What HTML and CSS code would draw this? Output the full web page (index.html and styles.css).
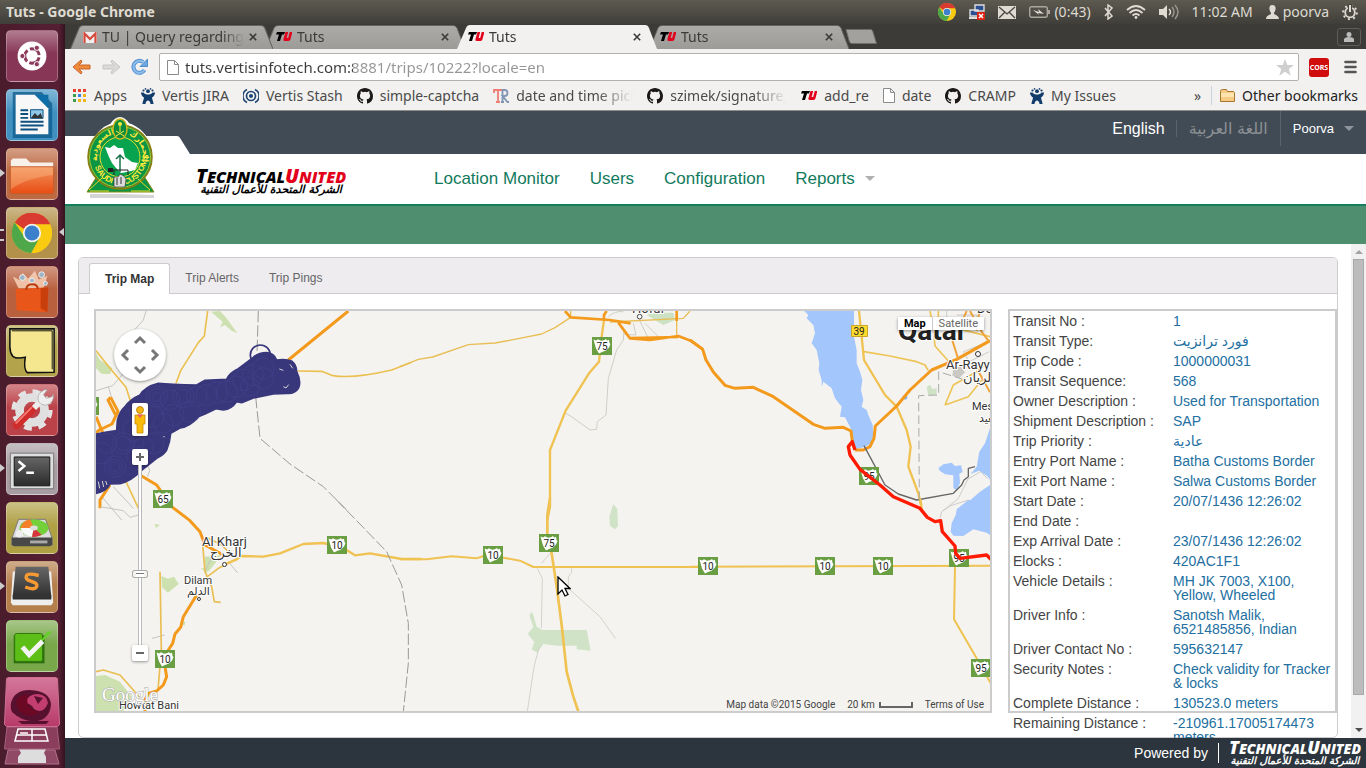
FILE: index.html
```html
<!DOCTYPE html>
<html lang="en">
<head>
<meta charset="utf-8">
<title>Tuts - Google Chrome</title>
<link rel="stylesheet" href="styles.css">
</head>
<body>
<svg class="defs" width="0" height="0" aria-hidden="true">
  <defs>
    <symbol id="shield" viewBox="0 0 20 18"><path fill="#6a9e42" d="M0 0h20v18H0z"/><path fill="#fff" d="M1.500 2.500 4 3.500l2-1.300 3 1.500 3-.5 2-1.200 1 1.500 2-.8.500 3.300 1 1-1.500 3.500-3 3-4 1.500-3 1.500-3-5z"/></symbol>
    <symbol id="chrome" viewBox="0 0 42 42"><circle cx="21" cy="21" r="21" fill="#f9cc12"/><path fill="#da3b30" d="M3 10a21 21 0 0 1 37 2H21a9 9 0 0 0-8 5z"/><path fill="#4ea84a" d="M3 10a21 21 0 0 0 17 32l9-16a9 9 0 0 1-16-1z"/><circle cx="21" cy="21" r="9.500" fill="#f3f1ee"/><circle cx="21" cy="21" r="7.700" fill="#3c7fca"/></symbol>
    <symbol id="github" viewBox="0 0 16 16"><path fill="#1b1817" d="M8 0C3.580 0 0 3.580 0 8c0 3.540 2.290 6.530 5.470 7.590.4.070.550-.170.550-.380 0-.190-.010-.820-.010-1.490-2.010.370-2.530-.490-2.690-.940-.090-.230-.480-.940-.820-1.130-.280-.150-.680-.520-.010-.530.630-.010 1.080.580 1.230.820.720 1.210 1.870.870 2.330.660.070-.520.280-.870.510-1.070-1.780-.2-3.640-.890-3.640-3.950 0-.870.310-1.590.820-2.150-.080-.2-.360-1.020.080-2.120 0 0 .670-.210 2.200.820a7.600 7.600 0 0 1 4 0c1.530-1.040 2.200-.820 2.200-.820.440 1.100.160 1.920.080 2.120.510.560.820 1.270.820 2.150 0 3.070-1.870 3.750-3.650 3.950.290.250.540.730.540 1.480 0 1.070-.010 1.930-.010 2.200 0 .210.150.460.550.380A8 8 0 0 0 16 8c0-4.420-3.580-8-8-8z"/></symbol>
    <symbol id="jira" viewBox="0 0 14 16"><g fill="#123c6b"><circle cx="7" cy="3.200" r="1.900"/><circle cx="2.500" cy="2.500" r="1.100"/><circle cx="11.500" cy="2.500" r="1.100"/><circle cx="4.500" cy=".9" r=".8"/><circle cx="9.500" cy=".9" r=".8"/><path d="M0 4.500h2.500C3.500 6 5 6.500 7 6.500s3.500-.5 4.500-2H14c0 2.500-1.500 4-3 5 .2 2.500 1.500 4 1.500 6.500H9.500c0-2-1.500-3.500-2.500-3.500S4.500 14 4.500 16h-3C1.500 13.500 2.800 12 3 9.500c-1.500-1-3-2.500-3-5z"/></g></symbol>
    <symbol id="tu" viewBox="0 0 16 10"><path d="M1 0h8L8 2.600H6L4 9H1l2-6.400H0z"/><path fill="#e2001a" d="M9.500 0h2.700l-1.600 6h1.600L13.700 0H16.400l-2 7.500q-.5 1.500-2.400 1.500H9Q7 9 7.400 7.200z"/></symbol>
    <symbol id="page" viewBox="0 0 12 15"><path fill="#fff" stroke="#8b8b8b" d="M.5.5h7l4 4v10H.5zM7.500.500v4h4"/></symbol>
    <symbol id="cross" viewBox="0 0 8 8"><path fill="none" stroke="currentColor" stroke-width="1.600" d="m.8.8 6.400 6.400m0-6.400L.8 7.200"/></symbol>
    <linearGradient id="tabgrey" x2="0" y2="1"><stop stop-color="#adaba9"/><stop offset="1" stop-color="#9d9b98"/></linearGradient>
    <linearGradient id="orange" x2="0" y2="1"><stop stop-color="#f2935c"/><stop offset="1" stop-color="#e84d14"/></linearGradient>
    <linearGradient id="dark" x2="0" y2="1"><stop stop-color="#666"/><stop offset="1" stop-color="#2b2b2b"/></linearGradient>
  </defs>
</svg>

<div class="desktop">
  <header class="panel">
    <strong class="panel-title">Tuts - Google Chrome</strong>
    <div class="tray">
      <svg width="18" height="18"><use href="#chrome"/></svg>
      <svg width="16" height="16"><path fill="#2c4f93" stroke="#ddd" stroke-width="1.400" d="M6 1h9v6H6zM1 6h8v6H1z"/><path fill="#ddd" d="M0 13h10v2H0z"/><path fill="#d21" d="M8 8h8v8H8z"/><path stroke="#fff" stroke-width="1.500" d="m10 10 4 4m0-4-4 4"/></svg>
      <svg width="18" height="13"><path fill="#dfdbd2" d="M0 0h18v13H0z"/><path fill="none" stroke="#45443f" stroke-width="1.300" d="m1 1 8 7 8-7M1 12l6-6m10 6-6-6"/></svg>
      <span class="battery"><svg width="21" height="12"><rect x=".7" y=".7" width="17.600" height="10.600" rx="2" fill="none" stroke="#aaa79e" stroke-width="1.400"/><path fill="#aaa79e" d="M19 4h2v4h-2z"/><path fill="#dfdbd2" d="m4 4 6 2-1-3 6 5-6-1 1 2z"/></svg>(0:43)</span>
      <svg width="9" height="16"><path fill="none" stroke="#dfdbd2" stroke-width="1.500" d="m1 4 7 8-4 3V1l4 3-7 8"/></svg>
      <svg width="20" height="14"><g fill="none" stroke="#dfdbd2" stroke-width="1.800"><path d="M1 5q9-8 18 0M3.500 8q6.500-6 13 0M6.500 10.500q3.500-3 7 0"/></g><circle cx="10" cy="12.500" r="1.400" fill="#dfdbd2"/></svg>
      <svg width="20" height="16"><path fill="#dfdbd2" d="M0 5h4l4-4v14l-4-4H0z"/><path fill="none" stroke="#dfdbd2" stroke-width="1.500" d="M10 5q3 3 0 6"/><path fill="none" stroke="#98958c" stroke-width="1.500" d="M13 3q4 5 0 10M16 1q6 7 0 14"/></svg>
      <span class="clock">11:02 AM</span>
      <span class="who"><svg width="13" height="14"><path fill="#dfdbd2" d="M6.500 0C9 0 10 2 9.500 4.500 9 7 8 7 8 8.500c0 1.500 5 1.500 5 5.500H0c0-4 5-4 5-5.500C5 7 4 7 3.500 4.500 3 2 4 0 6.500 0z"/></svg>poorva</span>
      <svg width="16" height="16"><circle cx="8" cy="8.500" r="4.800" fill="none" stroke="#dfdbd2" stroke-width="1.800"/><circle cx="8" cy="8.500" r="6.800" fill="none" stroke="#dfdbd2" stroke-width="2" stroke-dasharray="2 3.340"/><path stroke="#45443f" stroke-width="4" d="M8 0v7"/><path stroke="#dfdbd2" stroke-width="2" d="M8 1v7"/></svg>
    </div>
  </header>

  <aside class="launcher">
    <div class="tile ubuntu"><svg viewBox="0 0 52 52"><circle cx="26" cy="26" r="15" fill="#fff"/><g fill="none" stroke="#8c3a5b"><circle cx="26" cy="26" r="7.500" stroke-width="3" stroke-dasharray="13 2.700" stroke-dashoffset="-1.500"/></g><g fill="#8c3a5b" stroke="#fff"><circle cx="16" cy="26" r="2.700"/><circle cx="31" cy="17.500" r="2.700"/><circle cx="31" cy="34.500" r="2.700"/></g></svg></div>
    <div class="tile writer"><svg viewBox="0 0 52 52"><path fill="#0f5c8e" d="M6 2h30l11 12v36H6z" opacity=".8"/><path fill="#f8f8f8" d="M9 5h20l14 14v27H9z"/><path fill="#0d6ea8" d="M29 5h14v14z"/><path stroke="#0d4f7e" stroke-width="2" d="M14 21h8m-8 4h8m-8 4h8m-8 4h24m-24 4h24m-24 4h18"/><path fill="#8cc7e8" stroke="#0d4f7e" d="M24.500 20.500h13v9h-13z"/><path fill="#333" d="m25 29 4-5 3 3 3-3 2 5z"/></svg></div>
    <div class="tile files run"><svg viewBox="0 0 52 52"><path fill="#f8f1ea" d="M4 14V12l2-2h14l4 4h24v10H4z"/><path fill="url(#orange)" stroke="#c65b27" d="M3.500 18.500h45v26l-1 2h-43l-1-2z"/><path fill="#ffd0a0" opacity=".3" d="M4 19h44v8Q20 30 4 42z"/></svg></div>
    <div class="tile chrome run many on"><svg viewBox="0 0 52 52"><use href="#chrome" x="5" y="5" width="42" height="42"/></svg></div>
    <div class="tile store"><svg viewBox="0 0 52 52"><path fill="#fbd6bd" opacity=".8" d="m12 22-6-12 8 4 2-8 6 6 7-8 4 9 9-4-4 13z"/><g fill="#9db4c7" stroke="#eee"><circle cx="16" cy="11" r="3"/><circle cx="26" cy="14" r="2.500"/><circle cx="36" cy="8" r="3"/><circle cx="40" cy="17" r="2"/></g><path fill="#e8561a" d="M9 23 43 21l-1 26-32-2z"/><path fill="#c93f0c" d="m35 22 8-1-1 26-7-4z"/><path fill="none" stroke="#b83c0c" stroke-width="2" d="M20 24q0-6 6-6t6 5"/></svg></div>
    <div class="tile notes"><svg viewBox="0 0 52 52"><path fill="#f4e790" stroke="#111" stroke-width="1.600" d="M3 3h46v45l-28 .5q-4-4-2-16-9 2-13-1-3-4-3-10z"/><path fill="none" stroke="#111" d="M5 5h42v40"/></svg></div>
    <div class="tile tools"><svg viewBox="0 0 52 52"><circle cx="26" cy="26" r="19" fill="none" stroke="#e3e3e3" stroke-width="5" stroke-dasharray="8 6.920"/><circle cx="26" cy="26" r="13" fill="none" stroke="#e0e0e0" stroke-width="9"/><path fill="none" stroke="#d12c2c" stroke-width="8" stroke-linecap="round" d="m10 42 17-17"/><path fill="none" stroke="#f27a70" stroke-width="2" d="m9 40 17-17"/><path fill="none" stroke="#eee" stroke-width="6" d="m28 24 9-9"/><path fill="#eee" stroke="#999" stroke-width=".6" d="M33 18q-3-9 6-13l3 0-4 5 3 4 6-2 1-3q2 10-8 12-4 0-7-3z"/></svg></div>
    <div class="tile term run"><svg viewBox="0 0 52 52"><path fill="#ddd" stroke="#777" d="M3.500 9.500h45v37h-45z"/><path fill="url(#dark)" stroke="#111" d="M7.500 13.500h37v30h-37z"/><path fill="none" stroke="#fff" stroke-width="2.600" d="m12 18 6 5-6 5m8 2h8"/></svg></div>
    <div class="tile disk"><svg viewBox="0 0 52 52"><path fill="#ddd" stroke="#777" d="M12 17h28l7 20v7H5v-7z"/><path fill="#484848" d="M5 36h42v7l-2 2H7l-2-2z"/><path fill="#aaa" d="M24 39h18v3H24z"/><ellipse cx="28" cy="26" rx="15" ry="9" fill="#73d03a"/><path fill="#f48029" d="m28 26-14 0q2-8 10-9z"/><path fill="#f8f8f8" d="m28 26-14 0q2 8 12 9z"/><path fill="#d8343e" d="m28 26 8 7q-5 3-10 2z"/><ellipse cx="28" cy="26" rx="4" ry="2.500" fill="#ddd"/><circle cx="13" cy="32" r="4" fill="#eee"/></svg></div>
    <div class="tile subl run"><svg viewBox="0 0 52 52"><path fill="#eee" d="m6 10-2 32 2 3h40l2-3-2-32z"/><path fill="url(#dark)" d="M9 5h34l3 30v4H6v-4z"/><path fill="#333" d="M6 34h40v4H6z"/><path fill="none" stroke="#f79a33" stroke-width="3.600" d="M33 14q-12-3-13 1-1 3 5 5 7 2 6 5-2 5-12 1"/></svg></div>
    <div class="tile done"><svg viewBox="0 0 52 52"><path fill="#2c6d0e" d="M7 15h32v29H7z"/><rect x="8" y="13" width="29" height="29" rx="2" fill="#5ebe18" stroke="#2f7a0c"/><path fill="#66cf2c" d="m30 28 17-17h-5z"/><path fill="none" stroke="#f4f4f4" stroke-width="5" d="m16 27 7 8 14-14"/></svg></div>
    <div class="stack">
      <svg viewBox="0 0 56 90"><defs><linearGradient id="pink" x2="0" y2="1"><stop stop-color="#d4789a"/><stop offset="1" stop-color="#b73a68"/></linearGradient></defs><path fill="#904a66" stroke="#b07089" d="m4 74-3 14h54l-4-14z"/><path fill="#ddd" d="M15 73h27l-2 4 2 4v6H14v-6l3-4z"/><path fill="#8a3e5b" stroke="#a5607c" d="M3 51 .5 73h55L53 51z"/><path fill="none" stroke="#fff" stroke-width="1.500" d="m14 53-3 12h33l-3-12zM12 59h31M28 53v12M16 57h8"/><path fill="url(#pink)" stroke="#cf6f92" d="m4.500 1.500 47 0 2 1 2 46-2 2h-51l-2-2 2-46z"/><path fill="#57112e" d="M9 22q6-10 22-7.500 15 2 16 14-1 15-16 17Q17 45 8 36 5 29 9 22z"/><path fill="#c23e70" d="M21 27q3-9 13-9 9 1 10 9-5 12-14 6-2-5-9-6z"/><path fill="#6b0823" d="M13 23q5-5 11-4-4 14 12 17-9 7-18 1-7-5-5-14z"/><path fill="#57112e" d="m30 20 9 2-5 6zM14 45h31l-3 3H18z"/></svg>
    </div>
  </aside>

  <div class="window">
    <div class="tabstrip">
      <div class="tab t1"><svg class="tab-shape" viewBox="0 0 200 24" preserveAspectRatio="none"><path fill="url(#tabgrey)" stroke="#65635f" d="M.500 24 9 3q1-2.500 4-2.500h175q3 0 4 2.500l8 21"/></svg><svg width="16" height="11"><path fill="#eee" d="M2 0h14v11H2z"/><path fill="none" stroke="#d54b3d" stroke-width="2.200" d="M3.500 11V1.500L9 7l5.500-5.500V11"/></svg><span class="tab-title">TU | Query regarding</span><button class="x" aria-label="Close"><svg width="8" height="8"><use href="#cross"/></svg></button></div>
      <div class="tab t2"><svg class="tab-shape" viewBox="0 0 200 24" preserveAspectRatio="none"><path fill="url(#tabgrey)" stroke="#65635f" d="M.500 24 9 3q1-2.500 4-2.500h175q3 0 4 2.500l8 21"/></svg><svg width="16" height="10"><use href="#tu"/></svg><span class="tab-title">Tuts</span><button class="x" aria-label="Close"><svg width="8" height="8"><use href="#cross"/></svg></button></div>
      <div class="tab t3"><svg class="tab-shape" viewBox="0 0 200 24" preserveAspectRatio="none"><path fill="#f2f1f0" d="M0 24 9 3q1-3 4-3h175q3 0 4 3l8 21z"/></svg><svg width="16" height="10"><use href="#tu"/></svg><span class="tab-title">Tuts</span><button class="x" aria-label="Close"><svg width="8" height="8"><use href="#cross"/></svg></button></div>
      <div class="tab t4"><svg class="tab-shape" viewBox="0 0 200 24" preserveAspectRatio="none"><path fill="url(#tabgrey)" stroke="#65635f" d="M.500 24 9 3q1-2.500 4-2.500h175q3 0 4 2.500l8 21"/></svg><svg width="16" height="10"><use href="#tu"/></svg><span class="tab-title">Tuts</span><button class="x" aria-label="Close"><svg width="8" height="8"><use href="#cross"/></svg></button></div>
      <button class="newtab" aria-label="New tab"><svg width="32" height="15"><path fill="#a3a19e" stroke="#6f6d69" d="M1 .5h25l1.500 1 4 13H6L4.500 13z"/></svg></button>
      <button class="avatar" aria-label="Profile"><svg width="10" height="10"><circle cx="5" cy="2.500" r="2.500" fill="#bbb"/><path fill="#bbb" d="M0 10V7q1-2 5-2t5 2v3z"/></svg></button>
    </div>

    <div class="toolbar">
      <button class="tool" aria-label="Back"><svg width="20" height="16"><path fill="#f08a3c" stroke="#c8642a" stroke-linejoin="round" d="M1 8 9 1l1 2-3 3h11v4H7l3 3-1 2z"/></svg></button>
      <button class="tool" aria-label="Forward"><svg width="20" height="16"><path fill="#dcdad8" stroke="#c8c6c3" stroke-linejoin="round" d="m19 8-8-7-1 2 3 3H2v4h11l-3 3 1 2z"/></svg></button>
      <button class="tool" aria-label="Reload"><svg width="18" height="18"><path fill="none" stroke="#4f8fd0" stroke-width="4" d="M13.500 12A6 6 0 1 1 12 4"/><path fill="none" stroke="#8fbdec" stroke-width="2" d="M13.500 12A6 6 0 1 1 12 4"/><path fill="#6fa6e0" stroke="#4f8fd0" d="M16.500 1v7.500H9z"/></svg></button>
      <div class="omnibox">
        <svg width="12" height="15"><use href="#page"/></svg>
        <input class="url" aria-label="Address" value="tuts.vertisinfotech.com:8881/trips/10222?locale=en">
        <svg width="18" height="17"><path fill="#cfcfcf" d="m9 0 2.300 6H18l-5.200 4 1.900 6.700L9 12.700l-5.700 4L5.200 10 0 6h6.700z"/></svg>
      </div>
      <button class="cors">CORS</button>
      <button class="tool menu" aria-label="Menu"><svg width="13" height="14"><path stroke="#555" stroke-width="2.600" stroke-linecap="round" d="M1.500 2h10m-10 5h10m-10 5h10"/></svg></button>
    </div>

    <nav class="bookmarks">
      <a href="#"><svg width="14" height="14"><path fill="#e8412f" d="M0 0h3v3H0zM5 0h3v3H5zM10 0h3v3h-3z"/><path fill="#3a9e4e" d="M0 5h3v3H0zM0 10h3v3H0z"/><path fill="#3c7fe8" d="M5 5h3v3H5z"/><path fill="#f0b41c" d="M10 5h3v3h-3zM5 10h3v3H5zM10 10h3v3h-3z"/></svg>Apps</a>
      <a href="#"><svg width="14" height="16"><use href="#jira"/></svg>Vertis JIRA</a>
      <a href="#"><svg width="16" height="16"><g fill="none" stroke="#1d4473" stroke-width="1.700"><path d="M4 1.500A7.200 7.200 0 0 0 4 14.500M12 1.500a7.200 7.200 0 0 1 0 13"/><circle cx="8" cy="8" r="4.500"/></g><circle cx="8" cy="8" r="2" fill="#1d4473"/></svg>Vertis Stash</a>
      <a href="#"><svg width="16" height="16"><use href="#github"/></svg>simple-captcha</a>
      <a href="#"><svg width="16" height="14"><path fill="none" stroke="#ef7d76" stroke-width="1.800" d="M1 4V1h10M5 1v12M3 13h4"/><path fill="none" stroke="#8195b4" stroke-width="1.800" d="M8 13h3M9.500 13V1h2q3 0 3 3t-3 3h-2l5 6H16"/></svg><span class="fade">date and time picker</span></a>
      <a href="#"><svg width="16" height="16"><use href="#github"/></svg><span class="fade">szimek/signature_pad</span></a>
      <a href="#"><svg width="16" height="10"><use href="#tu"/></svg>add_re</a>
      <a href="#"><svg width="12" height="15"><use href="#page"/></svg>date</a>
      <a href="#"><svg width="16" height="16"><use href="#github"/></svg>CRAMP</a>
      <a href="#"><svg width="14" height="16"><use href="#jira"/></svg>My Issues</a>
      <button class="more" aria-label="More bookmarks">»</button>
      <a href="#" class="other"><svg width="15" height="13"><path fill="#f6cb83" stroke="#a9762e" d="M.5 2.500q0-2 2-2h4l1 2h6l1 1v9H.5z"/><path fill="#fde3ae" d="M1 4h13v4H1z"/></svg>Other bookmarks</a>
    </nav>

    <main class="site">
      <div class="top">
        <svg class="notch" width="125" height="18"><path fill="#fff" d="M0 0h112q2 0 3 2l10 16H0z"/></svg>
        <ul class="util">
          <li><a href="#" class="lang">English</a></li>
          <li><a href="#" class="lang ar" lang="ar">اللغة العربية</a></li>
          <li class="account"><a href="#">Poorva<i class="caret"></i></a></li>
        </ul>
      </div>
      <svg class="emblem" viewBox="0 0 72 84">
        <path fill="#aaa" opacity=".5" d="m5 76 64 2v3H5z"/>
        <path fill="#fff" stroke="#fff" stroke-width="4" stroke-linejoin="round" d="M27 8q8-12 16 0 15 5 22 22 3 17-6 28l9 17H3l9-17Q2 45 7 28 14 13 27 8z"/>
        <path fill="#0a9545" stroke="#8c8a14" d="m14 56-12 19h67L57 56z"/>
        <circle cx="35" cy="40" r="32" fill="#0a9545" stroke="#8a7d12" stroke-width="1.500"/>
        <circle cx="35" cy="40" r="30.500" fill="none" stroke="#d8d023" stroke-width=".8"/>
        <circle cx="35" cy="40" r="20" fill="#08a34e" stroke="#e8dc2c"/>
        <path id="arc" fill="none" d="M13 46a23 23 0 1 1 44 0"/><path id="arc2" fill="none" d="M8 42q3 23 26 26"/><path id="arc3" fill="none" d="M36 68q21-2 27-28"/>
        <g class="emblem-text"><text lang="ar"><textPath href="#arc" startOffset="2">السعودية</textPath></text><text lang="ar"><textPath href="#arc" startOffset="52">الجمارك</textPath></text><text><textPath href="#arc2" startOffset="8">SAUDI</textPath></text><text><textPath href="#arc3" startOffset="4">CUSTOMS</textPath></text></g>
        <ellipse cx="35" cy="12" rx="7" ry="10" fill="#0a8b3f" stroke="#c9b71d" stroke-width="1.500"/><circle cx="35" cy="7" r="2" fill="#ffe93b"/><path fill="none" stroke="#ffe93b" d="M35 9v6m-4-1 8 5m0-5-8 5"/>
        <path fill="#fff" d="m20 30 5 1 4-3 4 3 5 0 2 9 7 5 6 1-3 7-8 2-6 1-5-5-4-5-3-6z"/>
        <path fill="none" stroke="#18734a" stroke-width="1.500" d="M35 38v17m-4-13 4-4 4 4"/><path fill="none" stroke="#222" d="M23 53h20v5m-14-5v5"/><path fill="#222" d="M23 51h5v4h-5z"/>
        <path fill="#ddd" stroke="#333" stroke-width=".7" d="M29 60h4l2-3 4 2 2 3-1 8H29z"/><path stroke="#333" d="M32 61v7m4-8v7"/>
        <path fill="none" stroke="#ead82a" d="m4 73 13-12m48 12L53 62M5 74h19m41 0H46"/>
      </svg>
      <div class="navbar">
        <a href="#" class="brand" aria-label="Technical United"><span class="brand-en"><b>T</b>ECHNICAL<em><b>U</b>NITED</em></span><span class="brand-ar" lang="ar">الشركة المتحدة للأعمال التقنية</span></a>
        <nav class="mainnav"><a href="#">Location Monitor</a><a href="#">Users</a><a href="#">Configuration</a><a href="#">Reports<i class="caret"></i></a></nav>
      </div>
      <div class="band"></div>

      <div class="scroller">
        <div class="content">
          <section class="card">
            <div class="card-tabs"><a href="#" class="active">Trip Map</a><a href="#">Trip Alerts</a><a href="#">Trip Pings</a></div>
            <div class="card-body">
              <div class="map">
                <svg class="map-art" viewBox="96 311 894 400" preserveAspectRatio="xMidYMid slice">
                  <g fill="none" stroke-linejoin="round">
                    <g transform="translate(90 300) scale(.33333)">
                      <path fill="#cde1b0" d="m18 160 12 20 38 25-8 17H35l-17-17zM363 35l27-2 20 22 32 45-17-8-20-17-15 7 8-17z"/>
                      <g stroke="#c4c4c0" stroke-width="3"><path d="m168 33-8 27-40 45M18 272l50-15 40-45M55 260l12 40M35 590l60 70M70 560l60 65M160 480l20 30-8 20"/></g>
                      <g stroke="#ebc050" stroke-width="5"><path d="m353 33-10 75-18 20-53 84-14 38M18 152l42 53 48 57 14 43M622 213l73 1 30 12q60 12 180-16l60-23M108 545l42 90"/></g>
                      <g stroke="#f39a1d" stroke-width="9"><path d="M775 33 595 180M62 292l22 42-18 38-38 18-10 8M62 292l-8 8 22 44M18 350l20 48M150 525l50 30 28 40M60 555l-30 45v25"/></g>
                      <path stroke="#999" stroke-width="3" stroke-dasharray="34 9" d="m505 33-8 257 13 125 90 77 100 68 70 70"/>
                      <path fill="#39377b" stroke="#39377b" stroke-width="5" d="M18 402 50 396 80 392 82 362Q88 335 105 320Q120 298 150 285Q165 260 205 250Q240 254 320 255L345 241L410 238Q418 218 445 206L490 172Q505 158 530 158Q552 160 560 180Q590 176 606 184Q620 195 620 215Q635 245 625 265Q615 282 590 280L550 282L490 294L455 308L440 305Q425 328 400 330L378 326L345 342L325 350Q300 380 270 384L242 400Q240 425 230 450Q225 462 200 475L150 515Q125 542 90 551L60 552Q50 574 18 580Z"/>
                      <g stroke="#43418b" stroke-width="2"><circle cx="200" cy="290" r="32"/><circle cx="200" cy="290" r="24"/><circle cx="200" cy="290" r="14"/><circle cx="240" cy="300" r="30"/><circle cx="280" cy="290" r="32"/><circle cx="280" cy="290" r="22"/><circle cx="320" cy="290" r="30"/><circle cx="350" cy="285" r="32"/><circle cx="380" cy="278" r="32"/><circle cx="410" cy="275" r="32"/><circle cx="440" cy="260" r="32"/><circle cx="460" cy="240" r="32"/><circle cx="490" cy="225" r="32"/><circle cx="520" cy="205" r="32"/><circle cx="520" cy="235" r="32"/><circle cx="480" cy="260" r="28"/><circle cx="100" cy="430" r="32"/><circle cx="100" cy="430" r="22"/><circle cx="75" cy="500" r="32"/><circle cx="75" cy="500" r="22"/><circle cx="75" cy="500" r="14"/><circle cx="150" cy="340" r="32"/><circle cx="130" cy="390" r="32"/><circle cx="190" cy="350" r="32"/><circle cx="220" cy="370" r="30"/><circle cx="250" cy="345" r="32"/><circle cx="190" cy="430" r="32"/><circle cx="160" cy="440" r="30"/><circle cx="140" cy="470" r="30"/><circle cx="300" cy="335" r="32"/><circle cx="35" cy="460" r="32"/><circle cx="50" cy="430" r="30"/></g>
                      <circle cx="511" cy="165" r="30" stroke="#39377b" stroke-width="5"/>
                      <path stroke="#d8d5d4" stroke-width="3" d="m568 207 12 4m20-18 8 12m-28 55 8 4 8-10M25 545l4 20m8-22 4 18m6-18 4 12M220 408l4 4"/>
                    </g>
                    <g transform="translate(90 500) scale(.33333)">
                      <path fill="#cde1b0" d="m18 528 27-3 45 20 35 45-25 45H18zM214 228l20 8 18-6 14 22-32 26-18-16zM345 170l50-5-38 48-12 5zM193 72l16 2-10 10zM275 370l12-6-4 14zM332 205h12v8z"/>
                      <g stroke="#c4c4c0" stroke-width="3"><path d="m30 20 70 12 20 20 30-8M186 415l38-10M365 170l-20 45M415 185l28 34"/></g>
                      <g stroke="#e9be52" stroke-width="5"><path d="m210 215 4 235-10 120M338 135l7 80 20 45 8 45 19 2M345 235l40-30 55-27M355 115l40 20 35 35M18 515l22-5 50 15 40 45 20 25"/></g>
                      <path stroke="#efc251" stroke-width="7" d="m400 195 40-17 15-10 65 2 50-10 70-28 60-3 60 15 35 22 45-6 95 17h60"/>
                      <path stroke="#f39a1d" stroke-width="9" d="m205-25 40 45 55 42 30 33 15 40 55 30M320 285l-40 65-8 32-17 20-7 28-13 20-10 50 5 30-10 25-20 18-25 7-10 20v35"/>
                      <path stroke="#999" stroke-width="3" stroke-dasharray="34 9" d="m740 0 150 155 45 100 20 115v120l-15 145"/>
                    </g>
                    <g transform="translate(400 300) scale(.33333)">
                      <path fill="#cde1c4" d="m740 45 30-7h50l5 22-35 15-25-15z"/>
                      <g stroke="#cfcfc6" stroke-width="3"><path d="m497 340 15 8 58 42 20-2 2-23 26-20 7-110 25-85 20-30 2-30M718 60l27 55M735 70l45 45M700 70l8 35-35-2M625 50q20-18 45-15"/></g>
                      <path stroke="#e8be55" stroke-width="4" d="m0 200 55-22 43-7 107-37 80-5 70-13 70-14 40-19 47-31V33M630 66l220-11 20-22M830 60v48"/>
                      <path stroke="#efc251" stroke-width="7" d="m612 60-7 50-8 75-30 35-70 112-47 118v170l-8 40"/>
                      <path stroke="#f39a1d" stroke-width="8" d="m495 33 17 19 118 8 62 10M655 68l35 47 60 5 85-12 37 14 36 25M620 33l-8 12v15M830 33v30M690 114l145-3"/>
                      <circle cx="719" cy="50" r="7" fill="#fff" stroke="#444" stroke-width="3"/>
                    </g>
                    <g transform="translate(690 300) scale(.33333)">
                      <g fill="#a3c6fc"><path d="m343 33 12 12-5 10 20 20 5 25-10 30 15 20 8 40-2 20 9 30v22l5-17 25 20 10 30 20 25-5 30 15 2 17 33 5 45 13 17 25-7 20-10 5-25-2-30-13-30-5-15-15-10 5-20-7-30 4-30-7-25-10-25v-40l-8-40V33zM900 385l-15 45-17 25-8 45-18 22 25-10 25 16 8 12zM900 555l-30 20-40 35-10 20h80zM745 505l15-12 25-5 10 10 18-2 5 20-10 5 2 28-10 22-10-7v-38l-25-3-15-10z"/></g>
                      <path fill="#cfe2c5" d="m710 262 10-8 8 14 12-4v20l-25 2z"/><path fill="#cbc9c4" d="m790 205 20-8 15 20-18 18-20-8z"/><circle cx="645" cy="292" r="7" fill="#82b4f5"/>
                      <g stroke="#ccc" stroke-width="3"><path d="m892 535-20-20-38 22-30 60-45 35M820 155l75-30M820 155l18 30 60-30M770 33v18M800 45h60v30"/></g>
                      <g stroke="#edc455" stroke-width="5"><path d="m522 155 78 13 80 17 25 10 10 17M765 315l25-60 70-40 20-18M765 315l70-25 40-50M720 33l10 50 5 55 40 45M745 33v40M740 70l160 40"/></g>
                      <path stroke="#efc251" stroke-width="7" d="m507 33 8 77 7 70 63 105 35 35 30 70 12 50-7 60 30 80 12 55"/>
                      <path stroke="#f39a1d" stroke-width="9" d="m0 120 38 28 10 32 22 36 35 40 30 9 55-3 60 28 120 83 35 12 55-3 23 11 4 32M495 450l25 0 20-10 12-25 4-37 64-60 40-48 65-60 75-32 100-56"/>
                      <path stroke="#f0a43c" stroke-width="6" d="m785 115 20 63M840 33l35 62 22 30M860 205l40 72M830 33l-18 40M868 33l-8 60"/>
                      <path stroke="#666" stroke-width="4" d="m522 437 63 118 40 27 55 18 110-20 25-25 7-15 13-10v-25l20-5"/>
                      <path stroke="#aaa" stroke-width="3" stroke-dasharray="26 12" d="m688 600-2-313 60-2v-70l70 22"/>
                    </g>
                    <g transform="translate(400 500) scale(.33333)">
                      <path fill="#d0e3c6" d="m640 12-12 38 2 28 15 10 9-10-2-50zM395 335l5 10 10 35 17 10h133l12 62-42-4v-11h-60l-40-5-18 26-17-10 8-22-20-25 17-20-12-35z"/>
                      <path stroke="#d3d3ca" stroke-width="3" d="m412 205 15 30-3 150M418 440l-16 60-20 135M515 205v13l-10 12v35l95 85 47 66M450 160l-25 30"/>
                      <path stroke="#efc251" stroke-width="6" d="m0 178 80 0 75-9 75 6 20-7 60 5 50 9 40 19h500"/>
                      <path stroke="#efc251" stroke-width="8" d="m450-5-8 50v55l13 60 15 100 15 115 15 140 20 75 17 50"/>
                    </g>
                    <g transform="translate(690 500) scale(.33333)">
                      <path fill="#a3c6fc" d="m835 0-35 28-3 17-12 25-3 25 8 12 30 1 30-20 40 10 10 7V0z"/>
                      <path stroke="#ccc" stroke-width="3" d="m750 55 5-20 25-17 30-10 25-8"/>
                      <path stroke="#efc251" stroke-width="6" d="m0 200 900-3M795 200l-3 158 68 117 45 80M690-5l5 20"/>
                    </g>
                  </g>
                  <g class="route"><use href="#shield" x="79" y="397" width="20" height="18"/><use href="#shield" x="153" y="490" width="20" height="18"/><use href="#shield" x="327" y="536" width="20" height="18"/><use href="#shield" x="155" y="650" width="20" height="18"/><use href="#shield" x="592" y="337" width="20" height="18"/><use href="#shield" x="483" y="546" width="20" height="18"/><use href="#shield" x="539" y="534" width="20" height="18"/><use href="#shield" x="698" y="557" width="20" height="18"/><use href="#shield" x="815" y="557" width="20" height="18"/><use href="#shield" x="873" y="557" width="20" height="18"/><use href="#shield" x="859" y="467" width="20" height="18"/><use href="#shield" x="949" y="549" width="20" height="18"/><use href="#shield" x="971" y="659" width="20" height="18"/>
                    <text x="163" y="503">65</text><text x="337" y="549">10</text><text x="165" y="663">10</text><text x="602" y="350">75</text><text x="493" y="559">10</text><text x="549" y="547">75</text><text x="708" y="570">10</text><text x="825" y="570">10</text><text x="883" y="570">10</text><text x="869" y="480">95</text><text x="959" y="562">95</text><text x="981" y="672">95</text>
                    <path fill="#ffdb2e" stroke="#c9a52a" d="M851.500 325.500h16v11h-16z"/><text x="859" y="335">39</text></g>
                  <g fill="none" stroke="#ff1a00" stroke-width="10" stroke-linejoin="round">
                    <path transform="translate(690 300) scale(.33333)" d="M495 450 487 425 475 440 480 465 510 508 570 555 610 590 690 625 712 652 735 665 752 662 757 695 795 738 797 760 810 775 890 765 905 780"/>
                  </g>
                  <g fill="#fff" stroke="#333"><circle cx="224.500" cy="564.500" r="2"/><circle cx="199" cy="599" r="1.500"/><circle cx="978" cy="354" r="2.500"/></g>
                  <g class="place"><text class="big" x="898" y="340">Qatar</text><text class="mid" x="202" y="546">Al Kharj</text><text class="mid" x="210" y="557" lang="ar">الخرج</text><text x="184" y="584">Dilam</text><text x="187" y="595" lang="ar">الدلم</text><text x="119" y="709">Howtat Bani</text><text class="mid" x="946" y="369">Ar-Rayyan</text><text class="mid" x="963" y="382" lang="ar">الريان</text><text x="972" y="410">Mesaieed</text><text x="979" y="422" lang="ar">مسيعيد</text><text class="mid" x="977" y="313">Doha</text><text class="mid" x="632" y="313">Hofuf</text></g>
                  <text class="google" x="102" y="701">Google</text>
                </svg>
                <div class="map-controls">
                  <button class="pan" aria-label="Pan"><svg width="52" height="52" fill="none" stroke="#777" stroke-width="3"><path d="m21 14 5-5 5 5M21 38l5 5 5-5M14 21l-5 5 5 5M38 21l5 5-5 5"/></svg></button>
                  <button class="pegman" aria-label="Street View"><svg width="12" height="28"><circle cx="6" cy="4" r="3.500" fill="#f4b512" stroke="#b67b08" stroke-width=".8"/><path fill="#f9bc0c" stroke="#c98a08" stroke-width=".8" d="M1 9h10v9H9v9H3v-9H1z"/><path fill="#ef5f5f" d="M3 8.500h6L6 12z"/></svg></button>
                  <button class="zoom" aria-label="Zoom in"><svg width="10" height="10"><path stroke="#666" stroke-width="2" d="M5 1v8M1 5h8"/></svg></button>
                  <input class="zoom-range" type="range" min="0" max="100" value="39" aria-label="Zoom level">
                  <button class="zoom" aria-label="Zoom out"><svg width="10" height="10"><path stroke="#666" stroke-width="2" d="M1 5h8"/></svg></button>
                </div>
                <div class="map-type"><button class="sel">Map</button><button>Satellite</button></div>
                <div class="map-legal"><span>Map data ©2015 Google</span><span class="scale">20 km<i></i></span><a href="#">Terms of Use</a></div>
                <svg class="pointer" width="14" height="22"><path fill="#fff" stroke="#000" stroke-width="1.300" d="M1 1v17l4-4 3 6 3-1.500-3-6h5z"/></svg>
              </div>
              <div class="details">
                <table>
                  <tr><th>Transit No :</th><td>1</td></tr>
                  <tr><th>Transit Type:</th><td lang="ar">فورد ترانزيت</td></tr>
                  <tr><th>Trip Code :</th><td>1000000031</td></tr>
                  <tr><th>Transit Sequence:</th><td>568</td></tr>
                  <tr><th>Owner Description :</th><td>Used for Transportation</td></tr>
                  <tr><th>Shipment Description :</th><td>SAP</td></tr>
                  <tr><th>Trip Priority :</th><td lang="ar">عادية</td></tr>
                  <tr><th>Entry Port Name :</th><td>Batha Customs Border</td></tr>
                  <tr><th>Exit Port Name :</th><td>Salwa Customs Border</td></tr>
                  <tr><th>Start Date :</th><td>20/07/1436 12:26:02</td></tr>
                  <tr><th>End Date :</th><td></td></tr>
                  <tr><th>Exp Arrival Date :</th><td>23/07/1436 12:26:02</td></tr>
                  <tr><th>Elocks :</th><td>420AC1F1</td></tr>
                  <tr><th>Vehicle Details :</th><td>MH JK 7003, X100, Yellow, Wheeled</td></tr>
                  <tr><th>Driver Info :</th><td>Sanotsh Malik, 6521485856, Indian</td></tr>
                  <tr><th>Driver Contact No :</th><td>595632147</td></tr>
                  <tr><th>Security Notes :</th><td>Check validity for Tracker &amp; locks</td></tr>
                  <tr><th>Complete Distance :</th><td>130523.0 meters</td></tr>
                  <tr><th>Remaining Distance :</th><td>-210961.17005174473 meters</td></tr>
                </table>
              </div>
            </div>
          </section>
        </div>
        <div class="scrollbar"><i class="up"></i><div class="track"><div class="thumb"></div></div><i class="down"></i></div>
      </div>

      <footer class="foot"><span class="powered">Powered by</span><span class="brand small"><span class="brand-en"><b>T</b>ECHNICAL<em><b>U</b>NITED</em></span><span class="brand-ar" lang="ar">الشركة المتحدة للأعمال التقنية</span></span></footer>
    </main>
  </div>
</div>
</body>
</html>
```
FILE: styles.css
```css
* { box-sizing: border-box; }
body { margin: 0; font-family: "Liberation Sans", "DejaVu Sans", sans-serif; overflow: hidden; }
button { border: 0; padding: 0; margin: 0; background: none; font: inherit; color: inherit; display: flex; align-items: center; justify-content: center; }
a { color: inherit; text-decoration: none; }
svg { flex: none; display: block; }
.defs { position: absolute; }

.desktop { height: 100vh; display: grid; grid-template: 24px minmax(0, 1fr) / 65px minmax(0, 1fr); }

.panel { grid-column: 1 / 3; display: flex; align-items: center; justify-content: space-between; padding: 0 8px 0 6px; background: linear-gradient(#5d5a50, #3f3e39); color: #dfdbd2; font: 14px/24px "Noto Sans", sans-serif; }
.panel-title { font-size: 14px; }
.tray { display: flex; align-items: center; gap: 13px; }
.battery, .who { display: flex; align-items: center; gap: 4px; }

.launcher { background: linear-gradient(90deg, #4a1c2c, #561f33 90%, #35121f); display: flex; flex-direction: column; align-items: center; gap: 7px; padding-top: 6px; padding-right: 1px; overflow: hidden; }
.tile { position: relative; flex: none; width: 52px; height: 52px; border-radius: 5px; border: 1px solid rgba(255, 255, 255, .25); background-image: linear-gradient(rgba(255, 255, 255, .35), rgba(255, 255, 255, 0) 45%); }
.tile svg { width: 100%; height: 100%; }
.tile.run::before { content: ""; position: absolute; left: -7px; top: 20px; border: 4px solid transparent; border-left: 5px solid #ccc; border-right: 0; }
.tile.many::before { top: 21px; width: 4px; height: 8px; border: solid #ccc; border-width: 2px 0; }
.tile.on::after { content: ""; position: absolute; right: -7px; top: 20px; border: 4px solid transparent; border-right: 5px solid #ccc; border-left: 0; }
.ubuntu { background-color: #873655; }
.writer { background-color: #4091c0; }
.files { background-color: #bd6a43; }
.chrome { background-color: #b3914a; }
.store { background-color: #b9603f; }
.notes { background-color: #b3a34a; }
.tools { background-color: #bb4248; }
.term { background-color: #a79da2; }
.disk { background-color: #afa044; }
.subl { background-color: #b57f4c; }
.done { background-color: #79a84a; }
.stack { flex: none; width: 56px; margin-top: -3px; }
.stack svg { width: 100%; }

.window { display: flex; flex-direction: column; min-height: 0; font-family: "Noto Sans", sans-serif; }
.tabstrip { flex: none; height: 25px; display: flex; align-items: flex-end; padding: 0 5px; background: #3c3b37; }
.tab { position: relative; flex: 0 1 200px; height: 24px; margin-right: -8px; padding: 0 16px 0 11px; display: flex; align-items: center; gap: 5px; font-size: 14px; color: #3b3a37; }
.tab > * { position: relative; }
.tab > .tab-shape { position: absolute; inset: 0; width: 100%; height: 100%; }
.t1 { z-index: 2; }
.t2 { z-index: 1; }
.t3 { z-index: 3; }
.tab-title { flex: 1; min-width: 0; line-height: 22px; overflow: hidden; white-space: nowrap; -webkit-mask-image: linear-gradient(90deg, #000 85%, transparent); }
.newtab { margin: 0 auto 5px 4px; }
.avatar { width: 24px; height: 18px; align-self: center; border: 1px solid #5f5d58; border-radius: 3px; color: #bbb; }

.toolbar { flex: none; height: 36px; display: flex; align-items: center; gap: 10px; padding: 0 6px 0 7px; background: #f2f1f0; }
.tool { width: 19px; }
.omnibox { flex: 1; height: 28px; display: flex; align-items: center; gap: 6px; padding: 0 4px 0 7px; background: #fff; border: 1px solid #b3b1ae; border-radius: 2px; }
.url { flex: 1; min-width: 0; border: 0; padding: 0; outline: 0; font: 15px/24px "Noto Sans", sans-serif; color: transparent; background: linear-gradient(90deg, #3c3c3c 168px, #959595 168px); -webkit-background-clip: text; background-clip: text; }
.cors { width: 20px; height: 19px; border-radius: 3px; background: #d00c0c; color: #fff; font: bold 7px/19px "Noto Sans", sans-serif; }
.menu { margin-left: 2px; }

.bookmarks { flex: none; height: 26px; display: flex; align-items: center; gap: 14px; padding: 0 8px 4px; background: #f2f1f0; border-bottom: 1px solid #8f8d8a; font-size: 14px; color: #4a4a4a; white-space: nowrap; }
.bookmarks a { display: flex; align-items: center; gap: 7px; }
.fade { width: 117px; overflow: hidden; -webkit-mask-image: linear-gradient(90deg, #000 70%, transparent); }
.more { margin-left: auto; }
.other { color: #222; border-left: 1px solid #c5d3de; padding-left: 8px; margin-left: -4px; }

.site { flex: 1; min-height: 0; position: relative; display: flex; flex-direction: column; font-family: "Liberation Sans", "DejaVu Sans", sans-serif; background: #fff; }
.top { flex: none; height: 43px; background: #414b55; display: flex; justify-content: space-between; }
.notch { align-self: flex-end; }
.util { list-style: none; margin: 0; padding: 0; height: 35px; display: flex; align-items: center; color: #fff; }
.lang { display: block; font-size: 16px; line-height: 17px; padding-right: 11px; border-right: 1px solid #59636d; }
.lang.ar { padding: 0 12px; border: 0; color: #8d9194; }
.account { align-self: stretch; display: flex; align-items: center; border-left: 1px solid #59636d; padding: 0 12px; font-size: 13px; }
.account a { display: flex; align-items: center; gap: 10px; }
.caret { display: inline-block; border: 5px solid transparent; border-top-color: #8d949b; border-bottom: 0; }
.emblem { position: absolute; left: 20px; top: 6px; width: 72px; height: 84px; }
.emblem-text { fill: #ffe93b; font: bold 8px "Liberation Sans", "DejaVu Sans", sans-serif; }
.navbar { flex: none; height: 50px; display: flex; align-items: center; gap: 87px; padding-left: 130px; }
.brand { display: flex; flex-direction: column; align-items: center; color: #000; white-space: nowrap; width: 152px; margin-top: 4px; }
.brand-en { font: italic 800 16px/16px "Open Sans", sans-serif; }
.brand-en b { font-size: 20px; font-weight: 800; }
.brand-en em { color: #e2001a; }
.brand-ar { font: bold italic 11px/10px "DejaVu Sans", sans-serif; }
.mainnav { display: flex; gap: 30px; color: #127a5c; font-size: 17px; }
.mainnav .caret { margin-left: 10px; vertical-align: 3px; border-top-color: #b0b0b0; }
.band { flex: none; height: 40px; background: #4f8f70; border-top: 2px solid #14805f; }

.scroller { flex: 1; min-height: 0; display: flex; }
.content { flex: 1; min-width: 0; padding: 13px 13px 0; display: flex; overflow: hidden; }
.card { flex: 1; min-width: 0; display: flex; flex-direction: column; border: 1px solid #ccc; border-radius: 5px; }
.card-tabs { flex: none; height: 36px; display: flex; align-items: flex-end; padding-left: 10px; background: #eeecef; border-bottom: 1px solid #ccc; border-radius: 4px 4px 0 0; font-size: 12px; color: #666; }
.card-tabs a { padding: 0 15px; line-height: 30px; }
.card-tabs .active { background: #fff; border: 1px solid #ccc; border-bottom: 0; border-radius: 3px 3px 0 0; margin-bottom: -1px; font-weight: bold; color: #333; }
.card-body { flex: 1; min-height: 0; display: grid; grid-template: minmax(0, 1fr) / minmax(0, 1fr) 329px; gap: 16px; padding: 15px 0 24px 15px; }
.map { position: relative; border: 2px solid #ccc; background: #f4f3f0; overflow: hidden; font-family: Roboto, sans-serif; }
.map-art { width: 100%; height: 100%; }
.route text { font: 10px Roboto, sans-serif; text-anchor: middle; fill: #222; }
.place text { font: 11px Roboto, "DejaVu Sans", sans-serif; fill: #333; stroke: #fff; stroke-width: 2px; paint-order: stroke; }
.place .mid { font-size: 13px; }
.place .big { font-size: 28px; font-weight: bold; fill: #222; }
.google { font: 19px "Liberation Serif", serif; fill: #fff; stroke: #aaa; stroke-width: 1px; paint-order: stroke; }
.map-controls { position: absolute; left: 18px; top: 18px; width: 52px; display: flex; flex-direction: column; align-items: center; }
.map-controls button { background: #fff; box-shadow: 0 1px 3px rgba(0, 0, 0, .4); border-radius: 2px; }
.map-controls .pan { width: 52px; height: 52px; border-radius: 50%; margin-bottom: 22px; }
.map-controls .pegman { width: 16px; height: 33px; margin-bottom: 13px; }
.zoom { width: 16px; height: 16px; }
.zoom-range { appearance: none; writing-mode: vertical-lr; direction: rtl; width: 16px; height: 180px; margin: 0; background: linear-gradient(90deg, transparent 6px, #bbb 6px, #bbb 7px, #fff 7px, #fff 9px, #bbb 9px, #bbb 10px, transparent 10px); }
.zoom-range::-webkit-slider-thumb { appearance: none; width: 16px; height: 8px; border: 1px solid #aaa; border-radius: 2px; background: linear-gradient(#fff 2px, #777 2px, #777 3px, #fff 3px) content-box #fff; padding: 0 3px; }
.map-type { position: absolute; right: 6px; top: 6px; display: flex; background: #fff; box-shadow: 0 1px 3px rgba(0, 0, 0, .4); font-size: 11px; color: #666; }
.map-type button { height: 13px; padding: 0 6px; }
.map-type .sel { font-weight: bold; color: #000; border-right: 1px solid #ccc; }
.map-legal { position: absolute; right: 6px; bottom: 0; display: flex; gap: 12px; font-size: 10px; line-height: 12px; color: #444; }
.scale { display: flex; align-items: center; gap: 4px; }
.scale i { width: 34px; height: 6px; border: 2px solid #666; border-top: 0; }
.pointer { position: absolute; left: 461px; top: 265px; }
.details { border: 2px solid #ccc; min-width: 0; color: #444; font-size: 14px; line-height: 14px; }
.details table { width: 100%; border-collapse: collapse; table-layout: fixed; }
.details th, .details td { padding: 3px 0 3px 3px; text-align: left; vertical-align: top; height: 20px; font-weight: normal; }
.details th { width: 160px; }
.details td { color: #236fa1; }

.scrollbar { flex: none; width: 15px; background: #f1f1f1; display: flex; flex-direction: column; align-items: center; gap: 5px; padding: 6px 0; }
.scrollbar .up { border: 4px solid transparent; border-top: 0; border-bottom-color: #a3a3a3; }
.scrollbar .down { border: 4px solid transparent; border-bottom: 0; border-top-color: #505050; }
.track { flex: 1; width: 11px; }
.thumb { height: 94%; background: #bcbcbc; border: 1px solid #a8a8a8; }

.foot { position: relative; flex: none; height: 30px; background: #2c353d; color: #fff; display: flex; justify-content: flex-end; align-items: center; padding-right: 5px; font-size: 15px; }
.powered { padding-right: 10px; margin-right: 10px; border-right: 1px solid #fff; font-size: 14px; line-height: 20px; }
.small { width: 132px; color: #fff; margin: 0; }
.small .brand-en { font-size: 14px; line-height: 14px; }
.small .brand-en b { font-size: 18px; }
.small .brand-en em { color: #fff; }
.small .brand-ar { font-size: 10px; }
```
